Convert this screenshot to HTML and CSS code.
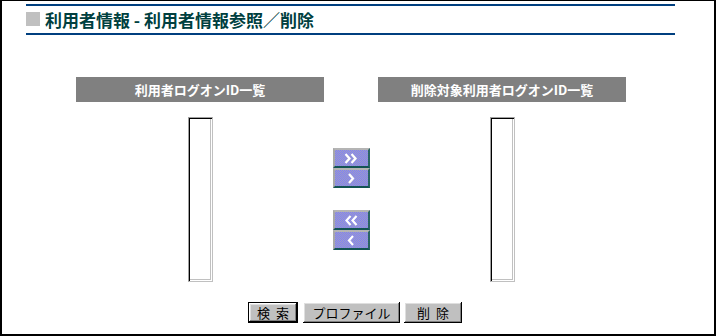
FILE: index.html
```html
<!DOCTYPE html>
<html lang="ja">
<head>
  <meta charset="UTF-8">
  <title>利用者情報参照／削除</title>
  <link rel="stylesheet" href="styles.css">
</head>
<body>
  <div class="frame">
    <!-- Page title -->
    <div class="page-title">
      <span class="title-mark"></span>
      <h1>利用者情報 - 利用者情報参照／削除</h1>
    </div>

    <!-- User lists -->
    <div class="lists">
      <div class="list-col">
        <div class="list-head">利用者ログオンID一覧</div>
        <div class="list-box"></div>
      </div>

      <div class="move-col">
        <div class="move-group">
          <button class="move-btn" title="すべて追加">
            <svg width="14" height="11" viewBox="0 0 14 11"><path d="M1.5 1l4 4.5-4 4.5M7.5 1l4 4.5-4 4.5" fill="none" stroke="#fff" stroke-width="2.2"/></svg>
          </button>
          <button class="move-btn" title="追加">
            <svg width="14" height="11" viewBox="0 0 14 11"><path d="M5 1l4 4.5-4 4.5" fill="none" stroke="#fff" stroke-width="2.2"/></svg>
          </button>
        </div>
        <div class="move-group">
          <button class="move-btn" title="すべて戻す">
            <svg width="14" height="11" viewBox="0 0 14 11"><path d="M6.5 1l-4 4.5 4 4.5M12.5 1l-4 4.5 4 4.5" fill="none" stroke="#fff" stroke-width="2.2"/></svg>
          </button>
          <button class="move-btn" title="戻す">
            <svg width="14" height="11" viewBox="0 0 14 11"><path d="M9 1L5 5.5 9 10" fill="none" stroke="#fff" stroke-width="2.2"/></svg>
          </button>
        </div>
      </div>

      <div class="list-col">
        <div class="list-head">削除対象利用者ログオンID一覧</div>
        <div class="list-box"></div>
      </div>
    </div>

    <!-- Actions -->
    <div class="actions">
      <button class="btn btn-default btn-search">検&nbsp;&nbsp;索</button>
      <button class="btn btn-profile">プロファイル</button>
      <button class="btn btn-delete">削&nbsp;&nbsp;除</button>
    </div>
  </div>
</body>
</html>
```

FILE: styles.css
```css
body {
  margin: 0;
  font-family: "Noto Sans CJK JP", "Liberation Sans", sans-serif;
  background: #fff;
  color: #000;
}

.frame {
  box-sizing: border-box;
  width: 716px;
  height: 336px;
  border: 2px solid #000;
  border-top-width: 1px;
}

/* Title */
.page-title {
  display: flex;
  align-items: center;
  width: 649px;
  height: 27px;
  margin: 3px 0 0 24px;
  border-top: 2px solid #003f7f;
  border-bottom: 2px solid #003f7f;
}

.title-mark {
  width: 14px;
  height: 14px;
  margin: -2px 5px 0 0;
  background: #c0c0c0;
}

.page-title h1 {
  margin: 0;
  font-size: 17px;
  font-weight: bold;
  line-height: 1;
  color: #003f3f;
}

/* Lists */
.lists {
  display: flex;
  margin: 42px 0 0 74px;
}

.list-col {
  display: flex;
  flex-direction: column;
  align-items: center;
  width: 248px;
}

.list-head {
  width: 100%;
  height: 25px;
  line-height: 25px;
  background: #808080;
  color: #fff;
  font-size: 13px;
  font-weight: bold;
  text-align: center;
}

.list-box {
  box-sizing: border-box;
  width: 25px;
  height: 165px;
  margin-top: 15px;
  background: #fff;
  border: 1px solid;
  border-color: #a0a0a0 #c0c0c0 #c0c0c0 #a0a0a0;
  box-shadow: inset 1px 1px #000, inset -1px -1px #fff, inset -2px -2px #c0c0c0;
}

.move-col {
  display: flex;
  flex-direction: column;
  align-items: center;
  gap: 22px;
  width: 54px;
  padding-top: 71px;
}

.move-group {
  display: flex;
  flex-direction: column;
}

.move-btn {
  display: flex;
  align-items: center;
  justify-content: center;
  box-sizing: border-box;
  width: 37px;
  height: 20px;
  padding: 0;
  border: 2px solid;
  border-color: #b4b4b4 #2a6464 #145454 #a8a8a8;
  background-color: #8888e0;
  background-image: repeating-conic-gradient(#7e7ef8 0 25%, #a0a0c0 0 50%);
  background-size: 2px 2px;
  cursor: pointer;
}

/* Action buttons */
.actions {
  display: flex;
  gap: 4px;
  margin: 20px 0 0 246px;
}

.btn {
  box-sizing: border-box;
  height: 21px;
  padding: 0;
  border: none;
  background: #c0c0c0;
  font-family: "Noto Sans CJK JP", sans-serif;
  font-size: 13px;
  color: #000;
  box-shadow: inset -1px -1px #000, inset 1px 1px #fff, inset -2px -2px #808080, inset 2px 2px #dfdfdf;
  cursor: pointer;
}

.btn-default {
  border: 1px solid #000;
  margin-right: 1px;
}

.btn-search { width: 50px; }
.btn-profile { width: 97px; }
.btn-delete { width: 58px; }
```
